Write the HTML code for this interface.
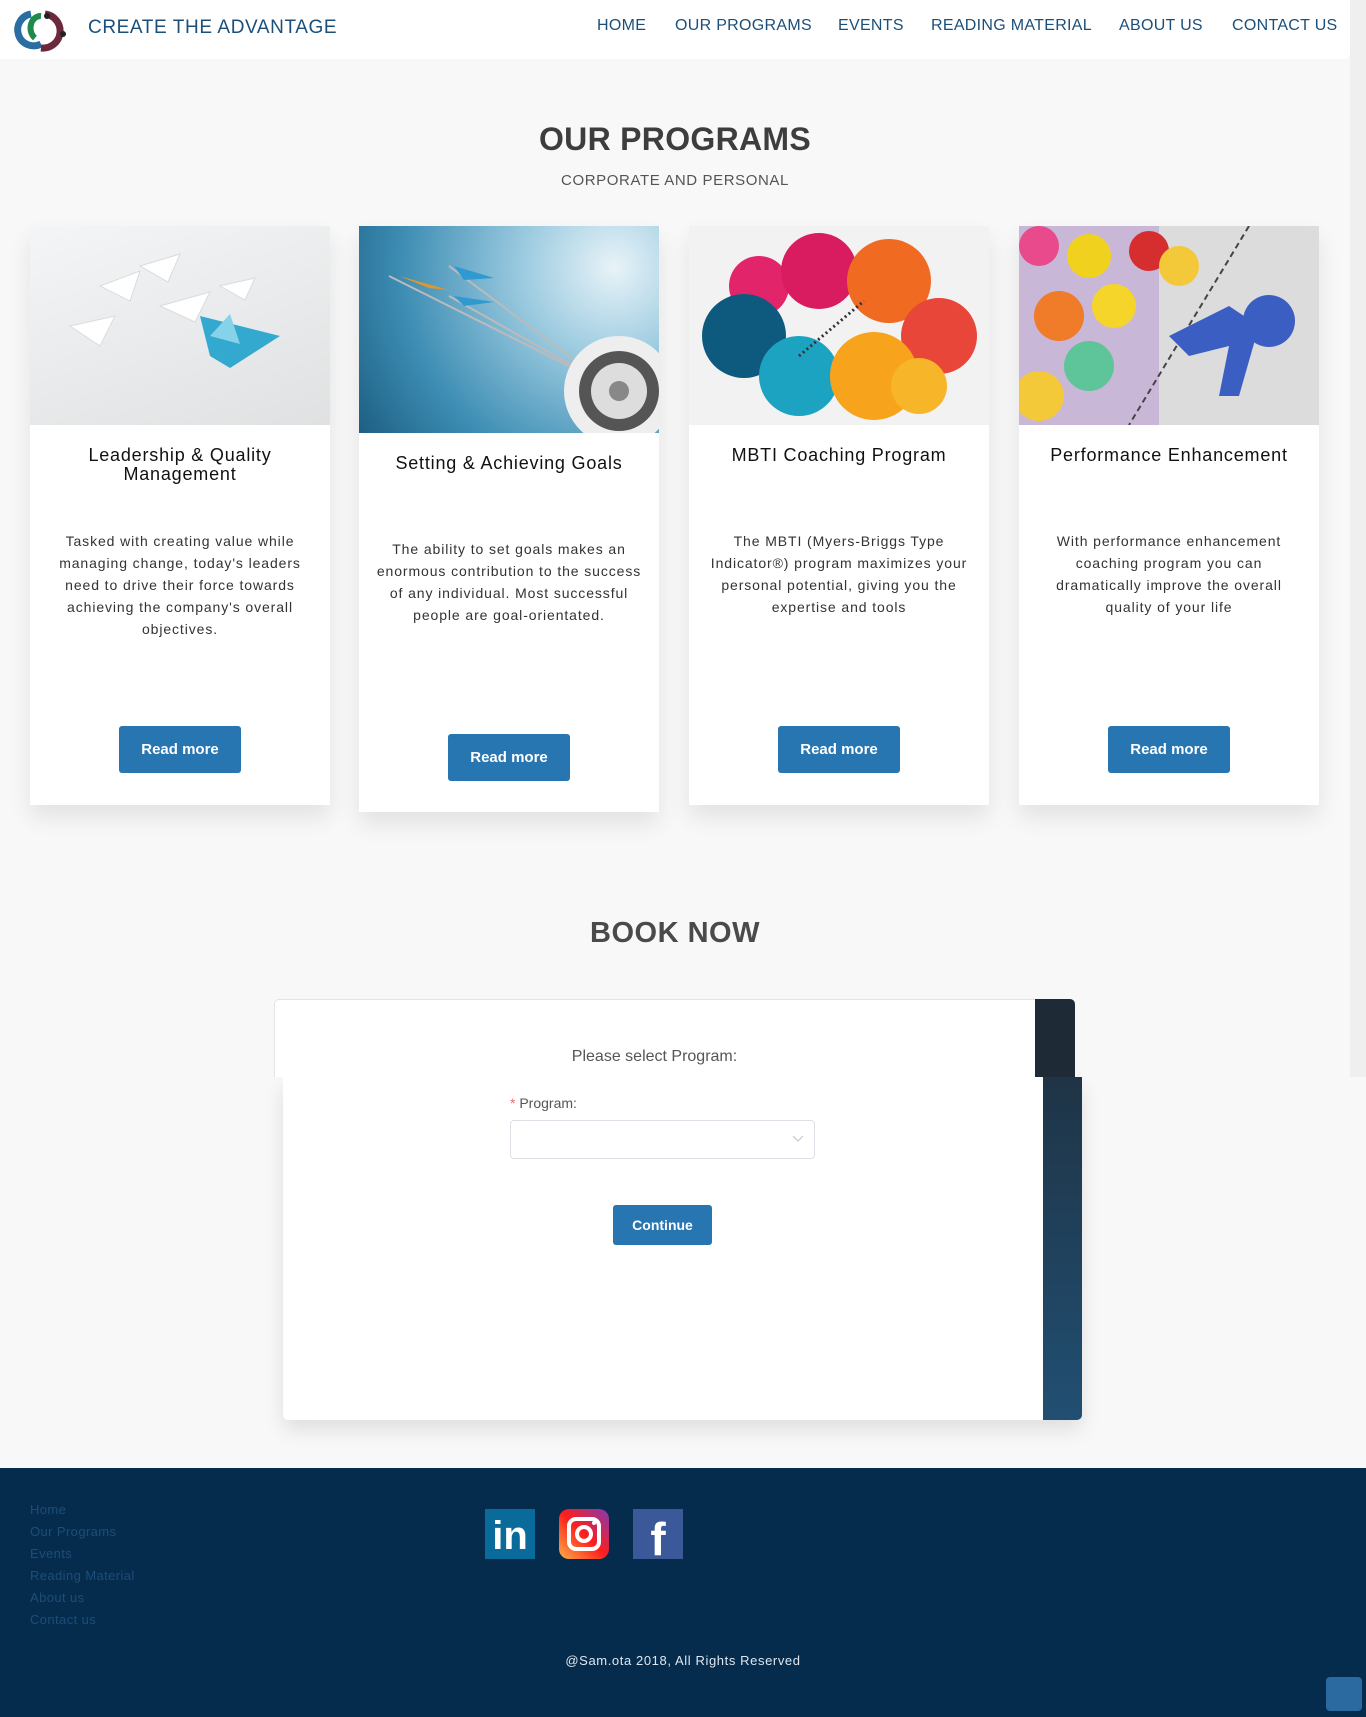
<!DOCTYPE html>
<html><head><meta charset="utf-8">
<style>
*{margin:0;padding:0;box-sizing:border-box}
html,body{width:1366px;height:1717px;overflow:hidden}
body{background:#f8f8f8;font-family:"Liberation Sans",sans-serif;position:relative;color:#333}
.abs{position:absolute}
.header{left:0;top:0;width:1350px;height:59px;background:#fff;border-radius:0 0 6px 0}
.sb{left:1350px;top:0;width:16px;height:1077px;background:#efefef}
.brand{left:88px;top:17px;font-size:19px;color:#1b4f7a;letter-spacing:.6px;font-weight:500}
.nav{top:17px;font-size:16px;color:#1b4f7a;letter-spacing:.3px}
h1{position:absolute;left:0;width:1350px;text-align:center;top:121px;font-size:32px;font-weight:bold;color:#3d3d3d;letter-spacing:.3px}
.sub{left:0;width:1350px;text-align:center;top:172px;font-size:15px;color:#555;letter-spacing:.6px}
.card{background:#fff;width:300px;box-shadow:0 12px 22px rgba(0,0,0,.09);overflow:hidden}
.card .img{position:absolute;left:0;top:0;width:300px;overflow:hidden}
.card .t{position:absolute;left:0;width:300px;text-align:center;font-size:18px;color:#111;line-height:19px;letter-spacing:.8px;font-weight:500}
.card .d{position:absolute;left:14px;width:272px;text-align:center;font-size:14px;color:#333;line-height:22px;letter-spacing:.9px}
.btn{position:absolute;left:89px;width:122px;height:47px;background:#2775b1;border-radius:3px;color:#fff;font-weight:bold;font-size:15px;text-align:center;line-height:47px}
.foot a{display:block;color:#1c4d7a;font-size:13px;line-height:22px;text-decoration:none;letter-spacing:.4px}
</style></head><body>
<div class="abs header"></div>
<div class="abs sb"></div>
<svg class="abs" style="left:11px;top:8px" width="60" height="44" viewBox="0 0 60 44">
<path d="M20 6 A16 16 0 1 0 30 36" fill="none" stroke="#2a6da3" stroke-width="7"/>
<path d="M24 30 A10 12 0 0 1 30 8" fill="none" stroke="#1e8a4c" stroke-width="6"/>
<path d="M34 6 A16 16 0 0 1 30 40" fill="none" stroke="#6b2a3b" stroke-width="7"/>
<circle cx="36" cy="8" r="3" fill="#222"/><circle cx="52" cy="26" r="3" fill="#222"/>
</svg>
<div class="abs brand">CREATE THE ADVANTAGE</div>
<div class="abs nav" style="left:597px">HOME</div>
<div class="abs nav" style="left:675px">OUR PROGRAMS</div>
<div class="abs nav" style="left:838px">EVENTS</div>
<div class="abs nav" style="left:931px">READING MATERIAL</div>
<div class="abs nav" style="left:1119px">ABOUT US</div>
<div class="abs nav" style="left:1232px">CONTACT US</div>

<h1>OUR PROGRAMS</h1>
<div class="abs sub">CORPORATE AND PERSONAL</div>

<div class="abs card" style="left:30px;top:226px;height:579px">
 <div class="img" style="height:199px;background:linear-gradient(160deg,#f4f5f6,#dfe1e2)">
  <svg width="300" height="199"><g fill="#fff" stroke="#d8dbe0"><path d="M70 60 l40 -15 l-10 30 z"/><path d="M110 40 l40 -12 l-12 28z"/><path d="M40 100 l45 -10 l-15 30z"/><path d="M130 80 l50 -14 l-15 30z"/><path d="M190 60 l35 -8 l-10 22z"/></g><path d="M170 90 l10 40 l20 12 l50 -32z" fill="#33a9cf"/><path d="M180 110 l20 -22 l10 30z" fill="#86d2e8"/></svg>
 </div>
 <div class="t" style="top:220px">Leadership &amp; Quality<br>Management</div>
 <div class="d" style="top:304px;left:24px;width:252px">Tasked with creating value while managing change, today's leaders need to drive their force towards achieving the company's overall objectives.</div>
 <div class="btn" style="top:500px">Read more</div>
</div>

<div class="abs card" style="left:359px;top:226px;height:586px">
 <div class="img" style="height:207px;background:radial-gradient(circle at 85% 20%,#e8f3f8 0,#9ccbe0 30%,#3d8db4 70%,#1d5f82 100%)">
  <svg width="300" height="207"><g stroke="#bbb" stroke-width="2"><line x1="30" y1="50" x2="250" y2="160"/><line x1="90" y1="40" x2="250" y2="160"/><line x1="90" y1="70" x2="250" y2="160"/></g><path d="M40 50 l50 14 l-20 -2z" fill="#e2962a"/><path d="M95 40 l40 12 l-30 2z M95 70 l40 6 l-30 4z" fill="#2e9ad0"/><circle cx="260" cy="165" r="55" fill="#eee"/><circle cx="260" cy="165" r="40" fill="#555"/><circle cx="260" cy="165" r="28" fill="#ddd"/><circle cx="260" cy="165" r="10" fill="#888"/></svg>
 </div>
 <div class="t" style="top:228px">Setting &amp; Achieving Goals</div>
 <div class="d" style="top:312px">The ability to set goals makes an enormous contribution to the success of any individual. Most successful people are goal-orientated.</div>
 <div class="btn" style="top:508px">Read more</div>
</div>

<div class="abs card" style="left:689px;top:226px;height:579px">
 <div class="img" style="height:199px;background:#f2f2f2">
  <svg width="300" height="199"><circle cx="70" cy="60" r="30" fill="#e2256a"/><circle cx="130" cy="45" r="38" fill="#d81c5f"/><circle cx="200" cy="55" r="42" fill="#f06a22"/><circle cx="250" cy="110" r="38" fill="#e9463a"/><circle cx="55" cy="110" r="42" fill="#0e5a7e"/><circle cx="110" cy="150" r="40" fill="#1ca3c2"/><circle cx="185" cy="150" r="44" fill="#f8a31c"/><circle cx="230" cy="160" r="28" fill="#f7b52a"/><line x1="110" y1="130" x2="175" y2="75" stroke="#333" stroke-width="3" stroke-dasharray="2 3"/></svg>
 </div>
 <div class="t" style="top:220px">MBTI Coaching Program</div>
 <div class="d" style="top:304px">The MBTI (Myers-Briggs Type Indicator®) program maximizes your personal potential, giving you the expertise and tools</div>
 <div class="btn" style="top:500px">Read more</div>
</div>

<div class="abs card" style="left:1019px;top:226px;height:579px">
 <div class="img" style="height:199px;background:#dcdcdc">
  <svg width="300" height="199"><rect x="0" y="0" width="140" height="199" fill="#c9b7d8"/><circle cx="20" cy="20" r="20" fill="#e84a8c"/><circle cx="70" cy="30" r="22" fill="#f0d21e"/><circle cx="130" cy="25" r="20" fill="#d62e2e"/><circle cx="40" cy="90" r="25" fill="#f07b28"/><circle cx="95" cy="80" r="22" fill="#f6d52a"/><circle cx="70" cy="140" r="25" fill="#5ec49a"/><circle cx="20" cy="170" r="25" fill="#f3c93a"/><circle cx="160" cy="40" r="20" fill="#f3c93a"/><line x1="230" y1="0" x2="110" y2="199" stroke="#444" stroke-width="2" stroke-dasharray="6 4"/><circle cx="250" cy="95" r="26" fill="#3b5ec2"/><path d="M150 110 l60 -30 l30 20 l-20 70 l-20 0 l10 -50 l-40 10z" fill="#3b5ec2"/></svg>
 </div>
 <div class="t" style="top:220px">Performance Enhancement</div>
 <div class="d" style="top:304px;left:24px;width:252px">With performance enhancement coaching program you can dramatically improve the overall quality of your life</div>
 <div class="btn" style="top:500px">Read more</div>
</div>

<div class="abs" style="left:0;width:1350px;text-align:center;top:917px;font-size:29px;font-weight:bold;color:#4a4a4a;letter-spacing:.5px">BOOK NOW</div>

<div class="abs" style="left:283px;top:1077px;width:799px;height:343px;background:#fff;box-shadow:0 10px 20px rgba(0,0,0,.1);border-radius:0 0 5px 5px"></div>
<div class="abs" style="left:1043px;top:1077px;width:39px;height:343px;background:linear-gradient(#1f3446,#214f72);border-radius:0 0 5px 0"></div>
<div class="abs" style="left:274px;top:999px;width:801px;height:78px;background:#fff;border:1px solid #e3e3e8;border-bottom:none;border-radius:5px 5px 0 0"></div>
<div class="abs" style="left:1035px;top:999px;width:40px;height:78px;background:#1e2a35;border-radius:0 5px 0 0"></div>
<div class="abs" style="left:274px;width:761px;text-align:center;top:1048px;font-size:16px;color:#555">Please select Program:</div>
<div class="abs" style="left:510px;top:1095px;font-size:14px;color:#555"><span style="color:#f56c6c">*</span> Program:</div>
<div class="abs" style="left:510px;top:1120px;width:305px;height:39px;border:1px solid #dcdfe6;border-radius:4px;background:#fff"></div>
<svg class="abs" style="left:792px;top:1135px" width="12" height="8"><path d="M1 1 L6 6 L11 1" stroke="#c0c4cc" fill="none"/></svg>
<div class="abs" style="left:613px;top:1205px;width:99px;height:40px;background:#2775b1;border-radius:3px;color:#fff;font-weight:bold;font-size:14px;text-align:center;line-height:40px">Continue</div>

<div class="abs foot" style="left:0;top:1468px;width:1366px;height:249px;background:#062c4d">
 <div class="abs" style="left:30px;top:31px">
  <a>Home</a><a>Our Programs</a><a>Events</a><a>Reading Material</a><a>About us</a><a>Contact us</a>
 </div>
 <div class="abs" style="left:485px;top:41px;width:50px;height:50px;background:#0a6a9a;color:#fff;font-weight:bold;font-size:40px;line-height:54px;text-align:center">in</div>
 <div class="abs" style="left:559px;top:41px;width:50px;height:50px;border-radius:10px;background:linear-gradient(45deg,#fcb045,#fd1d1d 50%,#833ab4)">
  <div class="abs" style="left:8px;top:8px;width:34px;height:34px;border:4px solid #fff;border-radius:9px"></div>
  <div class="abs" style="left:16px;top:16px;width:18px;height:18px;border:4px solid #fff;border-radius:50%"></div>
  <div class="abs" style="left:33px;top:12px;width:4px;height:4px;background:#fff;border-radius:50%"></div>
 </div>
 <div class="abs" style="left:633px;top:41px;width:50px;height:50px;background:#3b5998;color:#fff;font-weight:bold;font-size:46px;line-height:60px;text-align:center;overflow:hidden">f</div>
 <div class="abs" style="left:0;width:1366px;text-align:center;top:185px;font-size:13px;color:#dfe6ee;letter-spacing:.6px">@Sam.ota 2018,  All Rights Reserved</div>
 <div class="abs" style="left:1326px;top:209px;width:36px;height:34px;background:#2a6aa0;border-radius:4px"></div>
</div>
</body></html>
